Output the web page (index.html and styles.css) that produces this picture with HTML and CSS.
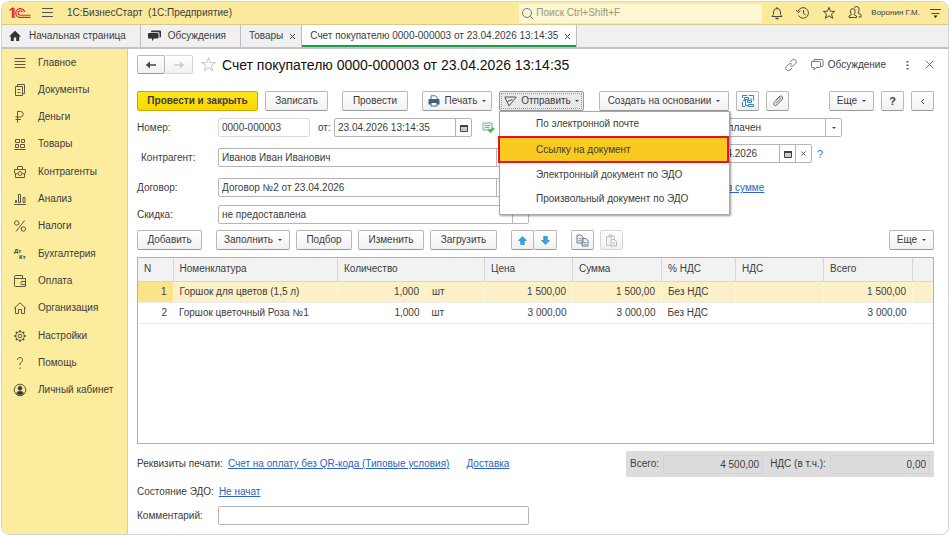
FILE: index.html
```html
<!DOCTYPE html>
<html lang="ru">
  <head>
    <meta charset="UTF-8" />
    <meta name="viewport" content="width=device-width, initial-scale=1.0" />
    <title>1С:БизнесСтарт</title>
    <link rel="stylesheet" href="styles.css">
  </head>
  <body>
    <div class="window">
      <header class="topbar">
        <svg class="logo" width="22" height="12" viewBox="0 0 22 12" fill="none" stroke="#e0262c">
          <path d="M.5 3.5 3.5 1.200V11M5 1v10" stroke-width="1.300" />
          <path d="M15.500 5A4.400 4.400 0 1 0 11.400 10.400H21.500" stroke-width="1.300" />
          <path d="M13.400 5.200A2.200 2.200 0 1 0 11.400 8.200H21.500" stroke-width="1.100" />
        </svg>
        <button class="icon-btn menu-btn" aria-label="Меню">
          <svg width="12" height="10" viewBox="0 0 12 10" stroke="#555"><path d="M0 .5h11M0 4.500h11M0 8.500h11" /></svg>
        </button>
        <span class="app-name">1С:БизнесСтарт&nbsp; (1С:Предприятие)</span>
        <label class="search">
          <svg width="13" height="13" viewBox="0 0 13 13" fill="none" stroke="#777"><circle cx="6" cy="6" r="4.500" /><path d="m9.300 9.300 3 3" /></svg>
          <input type="search" placeholder="Поиск Ctrl+Shift+F" aria-label="Поиск" />
        </label>
        <div class="top-icons">
          <button class="icon-btn" aria-label="Уведомления">
            <svg width="14" height="14" viewBox="0 0 14 14" fill="none" stroke="#4a4a3c"><path d="M2 10.500h10L10.500 8.500V6A3.500 3.500 0 0 0 7 2.500 3.500 3.500 0 0 0 3.500 6v2.500zM7 1v1.500" /><path d="M5.500 12.500h3" stroke-width="1.500" /></svg>
          </button>
          <button class="icon-btn" aria-label="История">
            <svg width="14" height="14" viewBox="0 0 14 14" fill="none" stroke="#4a4a3c"><path d="M2.200 5A5.300 5.300 0 1 1 2.500 9.500M7.500 4v3.500l2.200 1.500" /><path d="M.3 4 2 6.500 4.500 5" /></svg>
          </button>
          <button class="icon-btn" aria-label="Избранное">
            <svg width="14" height="14" viewBox="0 0 14 14" fill="none" stroke="#4a4a3c"><path d="m7 1.300 1.600 4h4.100L9.500 8l1.200 4.300L7 9.800l-3.700 2.500L4.500 8 1.300 5.300h4.100z" /></svg>
          </button>
          <button class="icon-btn" aria-label="Пользователи">
            <svg width="14" height="14" viewBox="0 0 14 14" fill="none" stroke="#4a4a3c"><path d="M1 11.500V10l2.700-1.500C2.700 7.500 2.500 6.300 2.500 5a2.300 2.300 0 0 1 4.600 0c0 1.300-.3 2.500-1.200 3.500L8.500 10v1.500z" /><path d="M6.200 2.300A2.400 2.400 0 0 1 11 3.800c0 1.300-.4 2.300-1 3.200l3 1.500v2.500h-2.500" /></svg>
          </button>
        </div>
        <span class="user">Воронин Г.М.</span>
        <button class="icon-btn" aria-label="Сервис">
          <svg width="14" height="12" viewBox="0 0 14 12"><path d="M1 2.500h11M2.500 6.500h8" stroke="#4a4a3c" /><path d="M4.500 8.500h4l-2 2.500z" fill="#222" /></svg>
        </button>
      </header>

      <nav class="tabs">
        <a href="#" class="tab tab-home">
          <svg width="12" height="12" viewBox="0 0 12 12" fill="#333"><path d="M6 .8 0 6.500h1.800V11h3V7.500h2.400V11h3V6.500H12z" /></svg>
          Начальная страница
        </a>
        <a href="#" class="tab tab-talks">
          <svg width="13" height="12" viewBox="0 0 13 12" fill="#333"><path d="M4 .5h8q1 0 1 1v5q0 1-1 1h-.5V3.500q0-1.300-1.300-1.300H3v-.7q0-1 1-1z" /><path d="M1 3h8.500q1 0 1 1v3.500q0 1-1 1H6L4 11.300V8.500H1q-1 0-1-1V4q0-1 1-1z" /></svg>
          Обсуждения
        </a>
        <div class="tab tab-doc">
          <a href="#">Товары</a>
          <button class="tab-close" aria-label="Закрыть">
            <svg width="7" height="7" viewBox="0 0 7 7" stroke="#444"><path d="m1 1 5 5M6 1 1 6" /></svg>
          </button>
        </div>
        <div class="tab tab-doc active">
          <a href="#">Счет покупателю 0000-000003 от 23.04.2026 13:14:35</a>
          <button class="tab-close" aria-label="Закрыть">
            <svg width="7" height="7" viewBox="0 0 7 7" stroke="#444"><path d="m1 1 5 5M6 1 1 6" /></svg>
          </button>
        </div>
      </nav>

      <div class="body">
        <nav class="sidebar">
          <ul>
            <li><a href="#"><svg viewBox="0 0 14 14"><path d="M1.500 2.500h11M1.500 5.500h11M1.500 8.500h11M1.500 11.500h11" /></svg>Главное</a></li>
            <li><a href="#"><svg viewBox="0 0 14 14"><path d="M2.500 3.500h7v9h-7zM4.500 3V1.500h7v9H10M4.500 6.500h3M4.500 9.500h3" /></svg>Документы</a></li>
            <li><a href="#"><svg viewBox="0 0 14 14"><path d="M4.500 12.500v-11h3a2.500 2.500 0 0 1 0 5.500h-5M2.500 9.500H8" /></svg>Деньги</a></li>
            <li><a href="#"><svg viewBox="0 0 14 14"><path d="M2.500 2.500h4v3h-4zM8.500 2.500h3v3h-3zM2.500 7.500h3v3h-3zM7.500 7.500h4v3h-4zM1.500 12.500h11" /></svg>Товары</a></li>
            <li><a href="#"><svg viewBox="0 0 14 14"><path d="M1.500 4.500h11v3.500l-3 1M1.500 4.500V8l3 1M2.500 9v3.500h9V9M4.500 4V2q0-.5.5-.5h4q.5 0 .5.500v2" /><circle cx="7" cy="8.500" r="2" /></svg>Контрагенты</a></li>
            <li><a href="#"><svg viewBox="0 0 14 14"><path d="M1 12.500h12M2.500 10.500v-2h1v2zM5.500 10.500v-8h2v8zM10 10.500v-5h2v5z" /></svg>Анализ</a></li>
            <li><a href="#"><svg viewBox="0 0 14 14"><path d="M11.500 1.500 3 12.500" /><circle cx="3.800" cy="4" r="2.200" /><circle cx="10.300" cy="10" r="2.200" /></svg>Налоги</a></li>
            <li><a href="#"><svg class="account" viewBox="0 0 14 14"><text x="1" y="6">Дт</text><text x="6" y="12">Кт</text></svg>Бухгалтерия</a></li>
            <li><a href="#"><svg viewBox="0 0 14 14"><path d="M2.500 4.500h10v8h-10q-1 0-1-1V3q0-1.500 1.500-1.500h6.500v3M1.500 3.500q0 1 1 1M12.500 7.500H9q-1 0-1 1v1q0 1 1 1h3.500" /></svg>Оплата</a></li>
            <li><a href="#"><svg viewBox="0 0 14 14"><path d="M1 7.500 7 1.800l6 5.700M2.500 6.500v6h3v-4h3v4h3v-6" /></svg>Организация</a></li>
            <li><a href="#"><svg viewBox="0 0 14 14"><circle cx="7" cy="7" r="4.300" /><circle cx="7" cy="7" r="1.800" /><path d="M7 1v1.700M7 11.300V13M1 7h1.700M11.300 7H13M2.800 2.800 4 4M10 10l1.200 1.200M11.200 2.800 10 4M4 10l-1.200 1.200" stroke-width="1.500" /></svg>Настройки</a></li>
            <li><a href="#"><svg viewBox="0 0 14 14"><path d="M4.500 4A2.500 2.500 0 1 1 8.500 6Q7 7 7 8.500v1M7 11.500V13" /></svg>Помощь</a></li>
            <li><a href="#"><svg viewBox="0 0 14 14"><circle cx="7" cy="7" r="5.800" /><circle cx="7" cy="5.200" r="2" fill="#333" /><path d="M3.500 10.300Q4 8.300 7 8.300t3.500 2Q9 12 7 12t-3.500-1.700z" fill="#333" /></svg>Личный кабинет</a></li>
          </ul>
        </nav>

        <main class="document">
          <div class="title-row">
            <div class="btn-pair">
              <button class="btn" aria-label="Назад"><svg width="12" height="8" viewBox="0 0 12 8"><path d="M11 4H3" stroke="#444" stroke-width="1.500" /><path d="M5 .5v7L.8 4z" fill="#444" /></svg></button>
              <button class="btn" aria-label="Вперед" disabled><svg width="12" height="8" viewBox="0 0 12 8"><path d="M1 4h8" stroke="#ccc" stroke-width="1.500" /><path d="M7 .5v7L11.200 4z" fill="#ccc" /></svg></button>
            </div>
            <button class="icon-btn favorite" aria-label="В избранное">
              <svg width="15" height="15" viewBox="0 0 14 14" fill="none" stroke="#ccc"><path d="m7 1 1.600 4.200h4.400L9.500 8l1.300 4.500L7 9.800l-3.800 2.700L4.500 8 1 5.200h4.400z" /></svg>
            </button>
            <h1>Счет покупателю 0000-000003 от 23.04.2026 13:14:35</h1>
            <div class="title-tools">
              <button class="icon-btn" aria-label="Ссылка">
                <svg width="14" height="14" viewBox="0 0 14 14" fill="none" stroke="#777"><path d="m6 4 2-2q1.700-1.500 3.500 0t.200 3.500L9.500 7.700q-1.800 1.500-3.500 0M8 10l-2 2q-1.700 1.500-3.500 0t-.2-3.500l2.200-2.200q1.800-1.500 3.500 0" /></svg>
              </button>
              <button class="icon-btn talk">
                <svg width="14" height="12" viewBox="0 0 14 12" fill="none" stroke="#777"><path d="M1.500 2.500h8q1 0 1 1v4q0 1-1 1H6L4 11V8.500H2.500q-1 0-1-1zM4 2.500v-2h8q1 0 1 1v5q0 1-1 1h-1.500" /></svg>
                Обсуждение
              </button>
              <button class="icon-btn" aria-label="Еще">
                <svg width="3" height="10" viewBox="0 0 3 10" fill="#555"><path d="M.5 1h2v1.500h-2zM.5 4.500h2V6h-2zM.5 8h2v1.500h-2z" /></svg>
              </button>
              <button class="icon-btn" aria-label="Закрыть">
                <svg width="9" height="9" viewBox="0 0 9 9" stroke="#777"><path d="m.7.7 7.600 7.600M8.300.7.7 8.300" /></svg>
              </button>
            </div>
          </div>

          <div class="toolbar commands">
            <button class="btn btn-primary">Провести и закрыть</button>
            <button class="btn btn-save">Записать</button>
            <button class="btn btn-post">Провести</button>
            <button class="btn btn-print">
              <svg width="12" height="12" viewBox="0 0 12 12"><path d="M3 4V.8h4.500L9 2.300V4" fill="#fff" stroke="#4d7185" /><path d="M1.500 4h9q1 0 1 1v4.500H.5V5q0-1 1-1z" fill="#3c6580" /><path d="M3 7.500h6v3.500H3z" fill="#fff" stroke="#3c6580" /></svg>
              Печать <span class="caret"></span>
            </button>
            <div class="send">
              <button class="btn btn-send" aria-expanded="true">
                <svg width="13" height="11" viewBox="0 0 13 11" fill="none" stroke="#555"><path d="M.8 1h11.400L5 10zM3.300 5.500 8.500 3.500" /></svg>
                Отправить <span class="caret"></span>
              </button>
              <div class="menu">
                <button>По электронной почте</button>
                <button class="selected">Ссылку на документ</button>
                <button>Электронный документ по ЭДО</button>
                <button>Произвольный документ по ЭДО</button>
              </div>
            </div>
            <button class="btn btn-create">Создать на основании <span class="caret"></span></button>
            <button class="btn btn-square" aria-label="Структура">
              <svg width="12" height="12" viewBox="0 0 12 12" fill="none" stroke="#3c83b5"><path d="M.5 3V.5h5M7 .5h4.500v5M.5 7v4.500H3M2.500 2.500h4v2h-4zM5.500 5.500h4v2h-4zM6.500 9.500h5v2h-5zM3.500 5v5.500h2.500M9 3v2M1 5.500h2" /></svg>
            </button>
            <button class="btn btn-square" aria-label="Файлы">
              <svg width="12" height="12" viewBox="0 0 12 12" fill="none" stroke="#666"><path d="m4 8.500 4-4.200q.8-1 0-1.600t-1.600.1l-4 4.400q-1.300 1.700-.2 2.900t2.800-.2l5-5.300q1.300-1.700.2-3T7.500 1.500L4 5" /></svg>
            </button>
            <button class="btn btn-more push">Еще <span class="caret"></span></button>
            <button class="btn btn-square help">?</button>
            <button class="btn btn-square" aria-label="Свернуть">
              <svg width="5" height="7" viewBox="0 0 5 7" fill="none" stroke="#444"><path d="M4 1 1.500 3.500 4 6" /></svg>
            </button>
          </div>

          <div class="form">
            <div class="form-left">
              <div class="form-main">
                <div class="row">
                  <label for="number">Номер:</label>
                  <div class="field number"><input id="number" type="text" value="0000-000003" /></div>
                  <label for="date" class="from">от:</label>
                  <div class="field">
                    <input id="date" type="text" value="23.04.2026 13:14:35" />
                    <button aria-label="Календарь"><svg width="8" height="8" viewBox="0 0 8 8"><path d="M.5 2h7v5.500h-7z" fill="#ccc" stroke="#444" /><path d="M0 1h8v2H0z" fill="#444" /></svg></button>
                  </div>
                  <svg class="posted" width="13" height="11" viewBox="0 0 13 11"><path d="M1 1h9v7H1z" fill="#e9eff3" stroke="#8fa0ac" /><path d="M3 3.500h5M3 5.500h4" stroke="#8fa0ac" /><path d="m6.500 7.500 2 2L12 6" fill="none" stroke="#3db54a" stroke-width="2" /></svg>
                </div>
                <div class="row">
                  <label for="client" class="inset">Контрагент:</label>
                  <div class="field">
                    <input id="client" type="text" value="Иванов Иван Иванович" />
                    <button aria-label="Выбрать"><span class="caret"></span></button>
                    <button aria-label="Открыть"></button>
                  </div>
                </div>
                <div class="row">
                  <label for="contract">Договор:</label>
                  <div class="field">
                    <input id="contract" type="text" value="Договор №2 от 23.04.2026" />
                    <button aria-label="Выбрать"><span class="caret"></span></button>
                    <button aria-label="Открыть"></button>
                  </div>
                </div>
              </div>
              <div class="row">
                <label for="discount">Скидка:</label>
                <div class="field">
                  <input id="discount" type="text" value="не предоставлена" />
                  <button aria-label="Открыть"></button>
                </div>
              </div>
            </div>
            <div class="form-right">
              <div class="field status">
                <select aria-label="Оплата"><option>Не оплачен</option></select>
                <span class="arrow"><span class="caret"></span></span>
              </div>
              <div class="due">
                <div class="field">
                  <input type="text" value="28.04.2026" aria-label="Срок оплаты" />
                  <button aria-label="Календарь"><svg width="8" height="8" viewBox="0 0 8 8"><path d="M.5 2h7v5.500h-7z" fill="#ccc" stroke="#444" /><path d="M0 1h8v2H0z" fill="#444" /></svg></button>
                  <button aria-label="Очистить"><svg width="5" height="5" viewBox="0 0 5 5" stroke="#555"><path d="m.5.5 4 4M4.500.5l-4 4" /></svg></button>
                </div>
                <a href="#" class="hint">?</a>
              </div>
              <a href="#" class="vat">НДС в сумме</a>
            </div>
          </div>

          <div class="toolbar items-toolbar">
            <button class="btn btn-add">Добавить</button>
            <button class="btn btn-fill">Заполнить <span class="caret"></span></button>
            <button class="btn btn-pick">Подбор</button>
            <button class="btn btn-edit">Изменить</button>
            <button class="btn btn-load">Загрузить</button>
            <div class="btn-pair arrows">
              <button class="btn" aria-label="Вверх"><svg width="9" height="9" viewBox="0 0 9 9"><path d="M4.500.5 8.500 4.500H6.300v4H2.700v-4H.5z" fill="#33a5e8" stroke="#1b7fc0" stroke-width=".6" /></svg></button>
              <button class="btn" aria-label="Вниз"><svg width="9" height="9" viewBox="0 0 9 9"><path d="M4.500 8.500.5 4.500h2.200v-4h3.600v4h2.200z" fill="#33a5e8" stroke="#1b7fc0" stroke-width=".6" /></svg></button>
            </div>
            <button class="btn btn-square" aria-label="Копировать">
              <svg width="13" height="13" viewBox="0 0 13 13" fill="#e8eef2" stroke="#71818c"><path d="M1 1h4l2 2v6H1zM6 4.500h4l2 2v5.500H6z" /><path d="M2.500 4.500H5M2.500 6.500H5M7.500 8.500h3M7.500 10.300h3" stroke-width=".7" /></svg>
            </button>
            <button class="btn btn-square" aria-label="Вставить" disabled>
              <svg width="13" height="13" viewBox="0 0 13 13" fill="#f7f4f2"><path d="M1.500 2.500h8v9h-8z" stroke="#d8bfb4" /><path d="M4 1h3v2H4z" stroke="#bbb" /><path d="M6 5.500h3.500l2 2v4.500H6z" stroke="#b5bcc0" /><path d="M7.500 8.500H10M7.500 10.300H10" stroke="#b5bcc0" stroke-width=".7" /></svg>
            </button>
            <button class="btn btn-more push">Еще <span class="caret"></span></button>
          </div>

          <div class="items">
            <table>
              <colgroup>
                <col class="col-n" />
                <col />
                <col class="col-price" />
                <col class="col-unit" />
                <col class="col-price" />
                <col class="col-total" />
                <col class="col-rate" />
                <col class="col-price" />
                <col class="col-total" />
                <col class="col-end" />
              </colgroup>
              <thead>
                <tr>
                  <th>N</th>
                  <th>Номенклатура</th>
                  <th colspan="2">Количество</th>
                  <th>Цена</th>
                  <th>Сумма</th>
                  <th>% НДС</th>
                  <th>НДС</th>
                  <th>Всего</th>
                  <th></th>
                </tr>
              </thead>
              <tbody>
                <tr class="current">
                  <td class="num">1</td>
                  <td>Горшок для цветов (1,5 л)</td>
                  <td class="num">1,000</td>
                  <td>шт</td>
                  <td class="num">1 500,00</td>
                  <td class="num">1 500,00</td>
                  <td>Без НДС</td>
                  <td></td>
                  <td class="num">1 500,00</td>
                  <td></td>
                </tr>
                <tr>
                  <td class="num">2</td>
                  <td>Горшок цветочный Роза №1</td>
                  <td class="num">1,000</td>
                  <td>шт</td>
                  <td class="num">3 000,00</td>
                  <td class="num">3 000,00</td>
                  <td>Без НДС</td>
                  <td></td>
                  <td class="num">3 000,00</td>
                  <td></td>
                </tr>
              </tbody>
            </table>
          </div>

          <div class="summary">
            <div class="print-details">
              <span>Реквизиты печати:</span>
              <a href="#">Счет на оплату без QR-кода (Типовые условия)</a>
              <a href="#" class="delivery">Доставка</a>
            </div>
            <div class="totals">
              <label for="total">Всего:</label>
              <input id="total" type="text" value="4 500,00" readonly />
              <label for="vat-total">НДС (в т.ч.):</label>
              <input id="vat-total" type="text" value="0,00" readonly />
            </div>
          </div>
          <div class="edo">
            <span>Состояние ЭДО:</span>
            <a href="#">Не начат</a>
          </div>
          <div class="row comment">
            <label for="comment">Комментарий:</label>
            <div class="field"><input id="comment" type="text" /></div>
          </div>
        </main>
      </div>
    </div>
  </body>
</html>
```
FILE: styles.css
```css
* {
  box-sizing: border-box;
}

body {
  margin: 0;
  background-color: #fff;
}

body,
button,
input,
select {
  font-family: "Liberation Sans", Arial, sans-serif;
  font-size: 10px;
  line-height: 12px;
  color: #3c3c3c;
}

svg {
  flex: none;
  display: block;
}

a {
  color: #2a63c4;
}

button {
  cursor: pointer;
}

.window {
  display: flex;
  flex-direction: column;
  min-height: calc(100vh - 2px);
  margin: 1px;
  border: 1px solid #d3d3d3;
  border-radius: 8px;
  overflow: hidden;
}

.icon-btn {
  display: flex;
  align-items: center;
  padding: 0;
  border: none;
  background: none;
}

/* top bar */
.topbar {
  display: flex;
  align-items: center;
  height: 23px;
  padding: 0 5px 0 7px;
  background-color: #fbea9c;
  border-bottom: 1px solid #d9ca85;
}

.menu-btn {
  margin: 0 13px 0 11px;
}

.app-name {
  white-space: nowrap;
}

.search {
  display: flex;
  align-items: center;
  gap: 2px;
  width: 243px;
  height: 19px;
  margin-left: auto;
  padding-left: 2px;
  background-color: #fdf6d2;
}

.search input {
  flex: 1;
  min-width: 0;
  padding: 0;
  border: none;
  background: none;
}

.search input::placeholder {
  color: #9b967c;
}

.top-icons {
  display: flex;
  align-items: center;
  gap: 12px;
  margin: 0 9px 0 8px;
}

.user {
  margin-right: 9px;
  font-size: 8px;
  white-space: nowrap;
}

/* open windows */
.tabs {
  display: flex;
  height: 24px;
  background-color: #f0f0f0;
  border-bottom: 2px solid #c2c2c2;
}

.tab {
  display: flex;
  align-items: center;
  border-right: 1px solid #bdbdbd;
  color: #3c3c3c;
  text-decoration: none;
  white-space: nowrap;
}

.tab a {
  color: #3c3c3c;
  text-decoration: none;
}

.tab-home {
  gap: 8px;
  padding: 0 14px 0 7px;
}

.tab-talks {
  gap: 7px;
  padding: 0 14px 0 7px;
}

.tab-doc {
  gap: 6px;
  padding: 0 5px 0 8px;
}

.tab.active {
  background-color: #fff;
  box-shadow: inset 0 -2px #1b9c4b;
}

.tab-close {
  padding: 0;
  border: none;
  background: none;
}

.body {
  display: flex;
  flex: 1;
}

/* sections */
.sidebar {
  flex: none;
  width: 126px;
  background-color: #fbec9e;
  border-right: 1px solid #d8cfa0;
}

.sidebar ul {
  display: flex;
  flex-direction: column;
  justify-content: space-between;
  min-height: 355px;
  margin: 0;
  padding: 0;
  list-style-type: none;
}

.sidebar a {
  display: flex;
  align-items: center;
  gap: 11px;
  height: 27px;
  padding-left: 11px;
  color: #3c3c3c;
  text-decoration: none;
}

.sidebar svg {
  width: 14px;
  height: 14px;
  fill: none;
  stroke: #5c5840;
}

.sidebar .account {
  fill: #3c3c3c;
  stroke: none;
  font-size: 6px;
  font-weight: bold;
}

/* document */
.document {
  display: flex;
  flex: 1;
  flex-direction: column;
  min-width: 0;
  padding: 6px 14px 9px 9px;
}

.title-row {
  display: flex;
  align-items: center;
  height: 19px;
}

h1 {
  margin: 0 0 0 6px;
  color: #111;
  font-size: 14px;
  font-weight: normal;
  line-height: 18px;
  white-space: nowrap;
}

.favorite {
  margin-left: 8px;
}

.title-tools {
  display: flex;
  align-items: center;
  gap: 16px;
  margin-left: auto;
}

.talk {
  gap: 4px;
  margin-right: 4px;
}

.title-tools .talk {
  margin-left: -4px;
}

.btn {
  display: flex;
  align-items: center;
  justify-content: center;
  gap: 5px;
  height: 20px;
  padding: 0;
  border: 1px solid #b9b9b9;
  border-bottom-color: #999;
  border-radius: 2px;
  background-image: linear-gradient(#fff, #f1f1f1);
  background-color: #fff;
  white-space: nowrap;
}

.btn:disabled {
  border-color: #d5d5d5;
}

.btn-pair {
  display: flex;
}

.btn-pair .btn {
  width: 28px;
  height: 19px;
}

.btn-pair .btn + .btn {
  border-left: none;
}

.btn-primary {
  width: 121px;
  border-color: #c9a800;
  background-image: linear-gradient(#ffe71a, #fbd500);
  font-weight: bold;
}

.caret {
  border: 2px solid transparent;
  border-top-color: #444;
  border-bottom: none;
}

.toolbar {
  display: flex;
  align-items: center;
  gap: 7px;
}

.commands {
  margin-top: 17px;
}

.push {
  margin-left: auto;
}

.btn-save {
  width: 63px;
}

.btn-post {
  width: 66px;
  margin-left: 7px;
}

.btn-print {
  width: 70px;
  margin-left: 7px;
}

.btn-send {
  width: 85px;
  gap: 4px;
  border: 1px solid #999;
  outline: 1px dotted #999;
  outline-offset: -3px;
  background-image: none;
  background-color: #e9e9e9;
}

.btn-create {
  width: 130px;
  margin-left: 8px;
}

.btn-square {
  width: 23px;
}

.btn-more {
  width: 45px;
}

.help {
  font-size: 11px;
  font-weight: bold;
}

.send {
  position: relative;
}

.menu {
  position: absolute;
  z-index: 10;
  top: 20px;
  left: 0;
  width: 231px;
  padding-bottom: 3px;
  border: 1px solid #a8a8a8;
  background-color: #fff;
  box-shadow: 1px 1px 2px rgba(0, 0, 0, 0.4);
}

.menu button {
  display: block;
  width: 100%;
  height: 24px;
  padding: 0 0 0 36px;
  border: none;
  background: none;
  text-align: left;
}

.menu .selected {
  width: calc(100% + 2px);
  height: 27px;
  margin-left: -2px;
  border: 2px solid #e8112d;
  background-color: #fbca20;
}

/* fields */
.form {
  display: grid;
  grid-template-columns: 1fr 231px;
  margin-top: 7px;
}

.form-left {
  display: flex;
  flex-direction: column;
  gap: 8px;
  max-width: 392px;
}

.form-main {
  display: flex;
  flex-direction: column;
  gap: 11px;
}

.row {
  display: flex;
  align-items: center;
}

.row label {
  flex: none;
  width: 81px;
}

.row .inset {
  padding-left: 4px;
}

.row .from {
  width: 24px;
  padding-left: 8px;
}

.field {
  display: flex;
  flex: 1;
  min-width: 0;
  height: 19px;
  border: 1px solid #b5b5b5;
  border-radius: 2px;
  background-color: #fff;
}

.field input,
.field select {
  flex: 1;
  width: 0;
  min-width: 0;
  padding: 0 0 0 3px;
  border: none;
  background: none;
  appearance: none;
}

.field button,
.arrow {
  display: flex;
  align-items: center;
  justify-content: center;
  width: 16px;
  padding: 0;
  border: none;
  border-left: 1px solid #b5b5b5;
  background: none;
}

.field.number {
  flex: none;
  width: 92px;
  border-color: #dcdcdc;
}

.posted {
  margin: 0 34px 0 10px;
}

.form-right {
  display: flex;
  flex-direction: column;
  align-items: flex-start;
  gap: 7px;
}

.status {
  flex: none;
  width: 139px;
}

.due {
  display: flex;
  align-items: center;
  gap: 5px;
}

.due .field {
  width: 109px;
}

.hint {
  color: #2a86d0;
  font-size: 11px;
  text-decoration: none;
}

.vat {
  margin-top: 12px;
}

/* goods */
.items-toolbar {
  gap: 6px;
  margin-top: 6px;
}

.btn-add {
  width: 65px;
}

.btn-fill {
  width: 74px;
  margin-left: 8px;
}

.btn-pick {
  width: 56px;
}

.btn-edit {
  width: 66px;
}

.btn-load {
  width: 67px;
}

.arrows {
  margin: 0 8px;
}

.arrows .btn {
  width: 23px;
  height: 20px;
}

.items {
  flex: 1;
  min-height: 187px;
  margin-top: 7px;
  border: 1px solid #b0b0b0;
}

table {
  width: 100%;
  table-layout: fixed;
  border-collapse: collapse;
}

.col-n {
  width: 35px;
}

.col-price {
  width: 88px;
}

.col-total {
  width: 89px;
}

.col-unit {
  width: 59px;
}

.col-rate {
  width: 74px;
}

.col-end {
  width: 20px;
}

th {
  height: 23px;
  padding: 0 6px;
  border-right: 1px solid #d6d6d6;
  border-bottom: 1px solid #d6d6d6;
  background-color: #f2f2f2;
  font-weight: normal;
  text-align: left;
}

th:last-child {
  border-right: none;
}

td {
  height: 21px;
  padding: 0 6px;
  border-bottom: 1px solid #ececec;
  white-space: nowrap;
}

.num {
  text-align: right;
}

.current td {
  border-right: 1px solid #fff8e0;
  background-color: #fcf0c8;
}

.current td:first-child {
  background-color: #fbe38a;
}

/* footer */
.summary {
  display: flex;
  align-items: center;
  justify-content: space-between;
  margin-top: 7px;
}

.print-details {
  display: flex;
  gap: 5px;
}

.delivery {
  margin-left: 12px;
}

.totals {
  display: flex;
  align-items: center;
  width: 308px;
  height: 26px;
  padding: 0 4px;
  background-color: #dcdcdc;
}

.totals input {
  flex: 1;
  min-width: 0;
  height: 19px;
  margin-left: 4px;
  padding: 0 3px;
  border: 1px solid #d2d2d2;
  background: none;
  text-align: right;
}

.totals input + label {
  margin-left: 7px;
}

.edo {
  display: flex;
  gap: 5px;
  margin-top: 9px;
}

.comment {
  max-width: 392px;
  margin-top: 8px;
}
```
